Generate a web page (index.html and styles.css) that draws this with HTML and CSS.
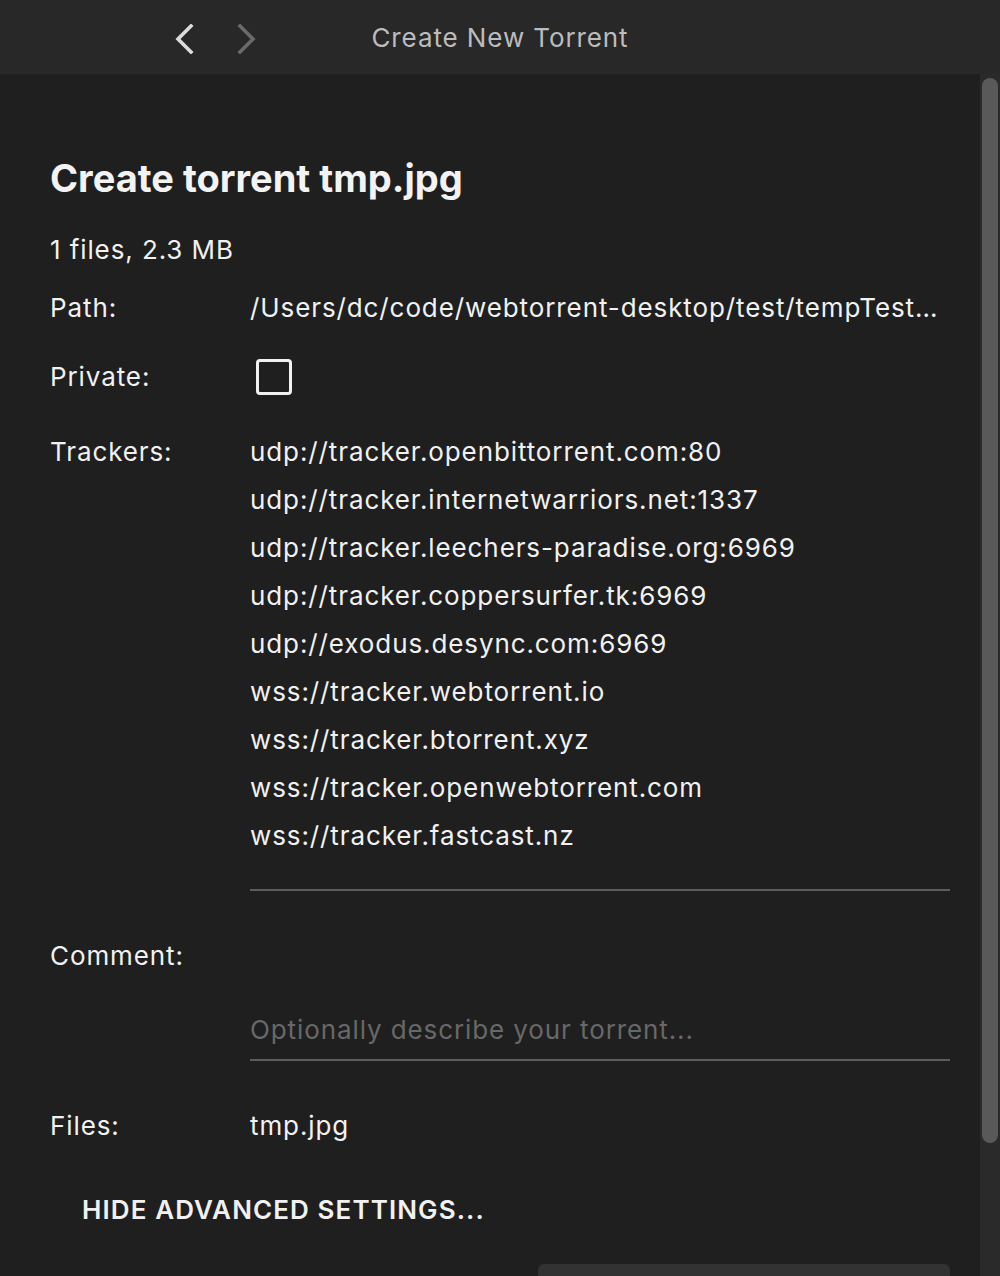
FILE: index.html
```html
<!DOCTYPE html>
<html>
<head>
<meta charset="utf-8">
<link rel="stylesheet" href="styles.css">
</head>
<body>
<header class="titlebar">
  <div class="nav">
    <svg class="arrow" width="24" height="30" viewBox="0 0 24 30"><path d="M18 2 L5 15 L18 28" fill="none" stroke="#dcdcdc" stroke-width="3.6" stroke-linecap="square"/></svg>
    <svg class="arrow fwd" width="24" height="30" viewBox="0 0 24 30"><path d="M5 2 L18 15 L5 28" fill="none" stroke="#6a6a6a" stroke-width="3.6" stroke-linecap="square"/></svg>
  </div>
  <div class="title">Create New Torrent</div>
</header>
<div class="main">
  <div class="content">
    <h1 class="heading">Create torrent tmp.jpg</h1>
    <div class="summary">1 files, 2.3 MB</div>
    <div class="row row-path">
      <div class="label">Path:</div>
      <div class="value nowrap">/Users/dc/code/webtorrent-desktop/test/tempTest…</div>
    </div>
    <div class="row row-private">
      <div class="label">Private:</div>
      <div class="value"><span class="checkbox"></span></div>
    </div>
    <div class="row row-trackers">
      <div class="label lh48">Trackers:</div>
      <div class="value field trackers">
        <div>udp://tracker.openbittorrent.com:80</div>
        <div>udp://tracker.internetwarriors.net:1337</div>
        <div>udp://tracker.leechers-paradise.org:6969</div>
        <div>udp://tracker.coppersurfer.tk:6969</div>
        <div>udp://exodus.desync.com:6969</div>
        <div>wss://tracker.webtorrent.io</div>
        <div>wss://tracker.btorrent.xyz</div>
        <div>wss://tracker.openwebtorrent.com</div>
        <div>wss://tracker.fastcast.nz</div>
      </div>
    </div>
    <div class="row row-comment">
      <div class="label">Comment:</div>
      <div class="value field comment"><span class="placeholder">Optionally describe your torrent...</span></div>
    </div>
    <div class="row row-files">
      <div class="label">Files:</div>
      <div class="value">tmp.jpg</div>
    </div>
    <div class="advanced">Hide advanced settings...</div>
    <div class="buttons"><div class="button"></div></div>
  </div>
  <div class="scrollbar"><div class="thumb"></div></div>
</div>
</body>
</html>
```

FILE: styles.css
```css
html, body {
  margin: 0;
  padding: 0;
}
body {
  width: 1000px;
  height: 1276px;
  overflow: hidden;
  background: #1f1f1f;
  color: #f1f1f1;
  font-family: Inter, "Noto Sans", sans-serif;
  font-size: 26px;
  letter-spacing: 0.9px;
}
.titlebar {
  height: 74px;
  background: #282828;
  position: relative;
  display: flex;
  align-items: center;
  justify-content: center;
}
.nav {
  position: absolute;
  left: 173px;
  top: 24px;
  display: flex;
  gap: 38px;
}
.arrow { display: block; }
.title {
  color: #bcbcbc;
  font-size: 26px;
  letter-spacing: 0.9px;
}
.main {
  display: flex;
  height: 1202px;
}
.content {
  width: 980px;
  box-sizing: border-box;
  padding: 81px 30px 0 50px;
}
.scrollbar {
  width: 20px;
  background: #2a2a2a;
  padding: 4px 2px 0 2px;
  box-sizing: border-box;
}
.thumb {
  height: 1065px;
  background: #595959;
  border-radius: 8px;
}
.heading {
  margin: 0;
  font-size: 38px;
  line-height: 46px;
  font-weight: 700;
  color: #f3f3f3;
  letter-spacing: 0;
}
.summary {
  margin-top: 31px;
  line-height: 36px;
}
.row {
  display: flex;
  align-items: flex-start;
  line-height: 36px;
}
.label {
  width: 200px;
  flex: none;
}
.value {
  flex: 1;
  min-width: 0;
}
.lh48 { line-height: 48px; }
.nowrap {
  white-space: nowrap;
}
.row-path { margin-top: 22px; }
.row-private { margin-top: 33px; }
.checkbox {
  display: block;
  width: 30px;
  height: 30px;
  margin-left: 6px;
  border: 3px solid #f1f1f1;
  border-radius: 4px;
}
.row-trackers { margin-top: 33px; }
.field {
  border-bottom: 2px solid #5c5c5c;
}
.trackers {
  line-height: 48px;
  padding-bottom: 29px;
}
.row-comment { margin-top: 47px; }
.comment {
  padding-top: 74px;
  padding-bottom: 11px;
}
.placeholder { color: #686868; }
.row-files { margin-top: 47px; }
.advanced {
  margin-top: 48px;
  margin-left: 32px;
  line-height: 36px;
  text-transform: uppercase;
  font-weight: 600;
  letter-spacing: 1.1px;
}
.buttons {
  display: flex;
  justify-content: flex-end;
  margin-top: 36px;
}
.button {
  width: 412px;
  height: 72px;
  background: #323232;
  border-radius: 6px;
}
```
